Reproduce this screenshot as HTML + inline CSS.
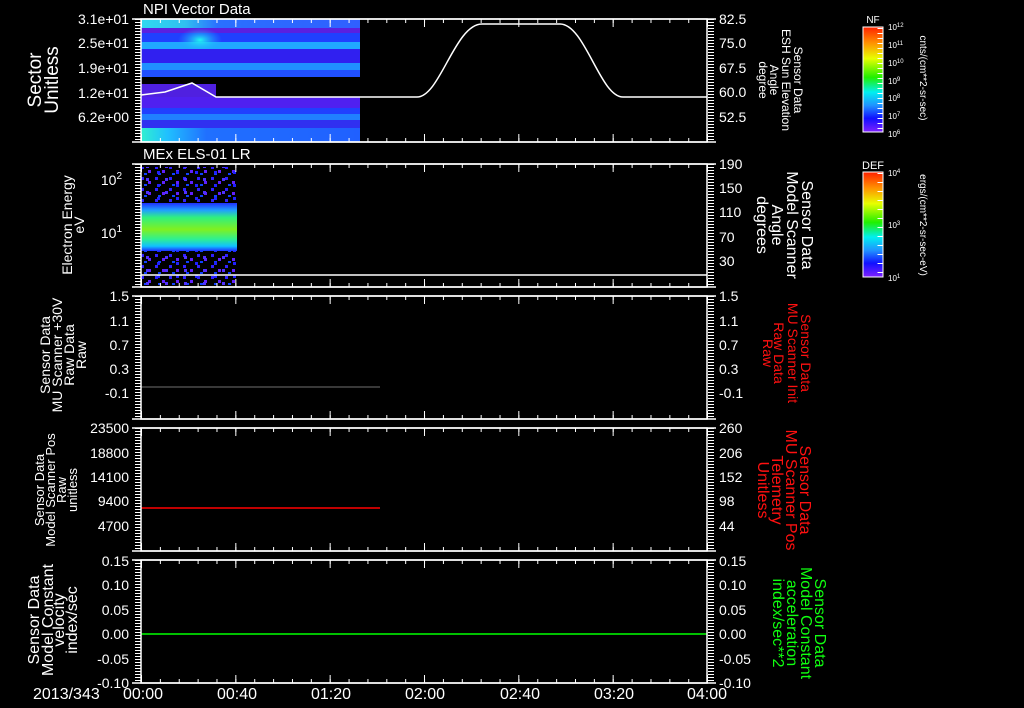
<!DOCTYPE html>
<html><head><meta charset="utf-8"><style>
html,body{margin:0;padding:0;background:#000;}
svg{display:block;}
text{font-family:"Liberation Sans",sans-serif;fill:#fff;}
</style></head><body>
<svg width="1024" height="708" viewBox="0 0 1024 708" xmlns="http://www.w3.org/2000/svg">
<defs>
<linearGradient id="cb" x1="0" y1="0" x2="0" y2="1">
<stop offset="0" stop-color="#ff2000"/><stop offset="0.15" stop-color="#ff9000"/><stop offset="0.3" stop-color="#e8ff00"/><stop offset="0.48" stop-color="#20f000"/><stop offset="0.62" stop-color="#00f0f0"/><stop offset="0.75" stop-color="#2090ff"/><stop offset="0.87" stop-color="#1010ff"/><stop offset="1" stop-color="#8020ff"/>
</linearGradient>
<linearGradient id="els" x1="0" y1="0" x2="0" y2="1">
<stop offset="0" stop-color="#2030ff"/><stop offset="0.15" stop-color="#20a0ff"/><stop offset="0.3" stop-color="#30f080"/><stop offset="0.55" stop-color="#80f020"/><stop offset="0.75" stop-color="#30f090"/><stop offset="0.9" stop-color="#10c0ff"/><stop offset="1" stop-color="#2030ff"/>
</linearGradient>
<linearGradient id="p1l" x1="0" y1="0" x2="1" y2="0">
<stop offset="0" stop-color="#30f0d0"/><stop offset="0.12" stop-color="#20c0ff"/><stop offset="0.3" stop-color="#2070ff"/><stop offset="1" stop-color="#2060ff"/>
</linearGradient>
<linearGradient id="p1t" x1="0" y1="0" x2="1" y2="0">
<stop offset="0" stop-color="#30d8f0"/><stop offset="0.2" stop-color="#30c0f0"/><stop offset="0.35" stop-color="#2a70ff"/><stop offset="1" stop-color="#3060ff"/>
</linearGradient>
<radialGradient id="cy" cx="0.5" cy="0.5" r="0.5">
<stop offset="0" stop-color="#20f8f0"/><stop offset="1" stop-color="#20a8ff" stop-opacity="0"/>
</radialGradient>
<pattern id="dots" width="14" height="11" patternUnits="userSpaceOnUse">
<rect x="1" y="1" width="3" height="3" fill="#3020ff"/><rect x="8" y="5" width="3" height="3" fill="#6020ff"/><rect x="4" y="8" width="3" height="2" fill="#1040ff"/>
</pattern>
<pattern id="dots2" width="19" height="13" patternUnits="userSpaceOnUse">
<rect x="5" y="2" width="3" height="3" fill="#2020ff"/><rect x="13" y="9" width="3" height="3" fill="#5030ff"/>
</pattern>
</defs>

<g>
<rect x="141" y="19" width="219" height="9" fill="url(#p1t)"/>
<rect x="141" y="28" width="219" height="5" fill="#5a20e0"/>
<rect x="141" y="33" width="219" height="9" fill="#2040ff"/>
<rect x="141" y="42" width="219" height="7" fill="#20a8ff"/>
<ellipse cx="200" cy="40" rx="22" ry="12" fill="url(#cy)"/>
<rect x="141" y="49" width="219" height="14" fill="#3020f0"/>
<rect x="141" y="63" width="219" height="7" fill="#2090ff"/>
<rect x="141" y="70" width="219" height="7" fill="#2050ff"/>
<rect x="141" y="84" width="75" height="13" fill="#5020e0"/>
<rect x="141" y="97" width="219" height="11" fill="#5020f0"/>
<rect x="141" y="108" width="219" height="6" fill="#2040ff"/>
<rect x="141" y="114" width="219" height="6" fill="#2080ff"/>
<rect x="141" y="120" width="219" height="8" fill="#3030f0"/>
<rect x="141" y="128" width="219" height="14" fill="url(#p1l)"/>
</g>
<path d="M141,95 L165,92 L192,83 L216,97 L417,97 C440,97 455,24 482,24 L560,24 C585,24 600,97 623,97 L707,97" fill="none" stroke="#fff" stroke-width="1.5"/>

<rect x="141" y="167" width="96" height="118" fill="url(#dots)"/>
<rect x="141" y="167" width="96" height="118" fill="url(#dots2)"/>
<rect x="141" y="203" width="96" height="48" fill="url(#els)"/>
<line x1="141" y1="275" x2="707" y2="275" stroke="#fff" stroke-width="1.5"/>

<line x1="141" y1="387" x2="380" y2="387" stroke="#707070" stroke-width="1"/>
<line x1="141" y1="508" x2="380" y2="508" stroke="#ff0000" stroke-width="1.5"/>
<line x1="141" y1="634" x2="707" y2="634" stroke="#00ff00" stroke-width="1.5"/>

<g fill="none" stroke="#fff">
<g id="fr1" transform="translate(0,19)">
<rect x="141" y="0" width="566" height="123" stroke-width="1.5"/>
<line x1="132" y1="0" x2="716" y2="0" stroke-width="1.5"/>
<line x1="132" y1="123" x2="716" y2="123" stroke-width="1.5"/>
<line x1="138" y1="0" x2="138" y2="123" stroke-width="6" stroke-dasharray="1 2"/>
<line x1="711" y1="0" x2="711" y2="123" stroke-width="6" stroke-dasharray="1 2"/>
<line x1="141" y1="2" x2="708" y2="2" stroke-width="4" stroke-dasharray="1 17.87"/>
<line x1="141" y1="121" x2="708" y2="121" stroke-width="4" stroke-dasharray="1 17.87"/>
<line x1="141" y1="4" x2="708" y2="4" stroke-width="8" stroke-dasharray="1 93.33"/>
<line x1="141" y1="119" x2="708" y2="119" stroke-width="8" stroke-dasharray="1 93.33"/>
</g>
<use href="#fr1" transform="translate(0,145)"/>
<use href="#fr1" transform="translate(0,277)"/>
<use href="#fr1" transform="translate(0,409)"/>
<use href="#fr1" transform="translate(0,541)"/>
</g>

<text x="143" y="14" font-size="15">NPI Vector Data</text>
<text x="143" y="159" font-size="15">MEx ELS-01 LR</text>

<g font-size="14" text-anchor="end">
<text x="129" y="24">3.1e+01</text>
<text x="129" y="48">2.5e+01</text>
<text x="129" y="73">1.9e+01</text>
<text x="129" y="98">1.2e+01</text>
<text x="129" y="122">6.2e+00</text>
<text x="122" y="185">10<tspan font-size="10" dy="-6">2</tspan></text>
<text x="122" y="238">10<tspan font-size="10" dy="-6">1</tspan></text>
<text x="129" y="301">1.5</text>
<text x="129" y="326">1.1</text>
<text x="129" y="350">0.7</text>
<text x="129" y="374">0.3</text>
<text x="129" y="398">-0.1</text>
<text x="129" y="433">23500</text>
<text x="129" y="458">18800</text>
<text x="129" y="482">14100</text>
<text x="129" y="506">9400</text>
<text x="129" y="531">4700</text>
<text x="129" y="566">0.15</text>
<text x="129" y="590">0.10</text>
<text x="129" y="615">0.05</text>
<text x="129" y="639">0.00</text>
<text x="129" y="664">-0.05</text>
<text x="129" y="688">-0.10</text>
</g>
<g font-size="14">
<text x="719" y="24">82.5</text><text x="719" y="48">75.0</text><text x="719" y="73">67.5</text><text x="719" y="97">60.0</text><text x="719" y="122">52.5</text>
<text x="719" y="169">190</text><text x="719" y="193">150</text><text x="719" y="217">110</text><text x="719" y="242">70</text><text x="719" y="266">30</text>
<text x="719" y="301">1.5</text><text x="719" y="326">1.1</text><text x="719" y="350">0.7</text><text x="719" y="374">0.3</text><text x="719" y="398">-0.1</text>
<text x="719" y="433">260</text><text x="719" y="458">206</text><text x="719" y="482">152</text><text x="719" y="506">98</text><text x="719" y="531">44</text>
<text x="719" y="566">0.15</text><text x="719" y="590">0.10</text><text x="719" y="615">0.05</text><text x="719" y="639">0.00</text><text x="719" y="664">-0.05</text><text x="719" y="688">-0.10</text>
</g>

<g font-size="16">
<text x="33" y="699">2013/343</text>
<g text-anchor="middle">
<text x="143" y="699">00:00</text><text x="237" y="699">00:40</text><text x="331" y="699">01:20</text><text x="425" y="699">02:00</text><text x="520" y="699">02:40</text><text x="614" y="699">03:20</text><text x="707" y="699">04:00</text>
</g></g>

<g text-anchor="middle">
<text font-size="19" transform="translate(41,80) rotate(-90)">Sector</text>
<text font-size="19" transform="translate(58,80) rotate(-90)">Unitless</text>
<text font-size="14" transform="translate(72,225) rotate(-90)">Electron Energy</text>
<text font-size="14" transform="translate(84,225) rotate(-90)">eV</text>
<text font-size="14" transform="translate(50,355) rotate(-90)">Sensor Data</text>
<text font-size="14" transform="translate(62,355) rotate(-90)">MU Scanner +30V</text>
<text font-size="14" transform="translate(74,355) rotate(-90)">Raw Data</text>
<text font-size="14" transform="translate(86,355) rotate(-90)">Raw</text>
<text font-size="13" transform="translate(44,490) rotate(-90)">Sensor Data</text>
<text font-size="13" transform="translate(55,490) rotate(-90)">Model Scanner Pos</text>
<text font-size="13" transform="translate(66,490) rotate(-90)">Raw</text>
<text font-size="13" transform="translate(77,490) rotate(-90)">unitless</text>
<text font-size="16" transform="translate(39,620) rotate(-90)">Sensor Data</text>
<text font-size="16" transform="translate(53,620) rotate(-90)">Model Constant</text>
<text font-size="16" transform="translate(64,620) rotate(-90)">velocity</text>
<text font-size="16" transform="translate(77,620) rotate(-90)">index/sec</text>
</g>

<g text-anchor="middle">
<text font-size="12" transform="translate(794,80) rotate(90)">Sensor Data</text>
<text font-size="12" transform="translate(782,80) rotate(90)">ESH Sun Elevation</text>
<text font-size="12" transform="translate(770,80) rotate(90)">Angle</text>
<text font-size="12" transform="translate(759,80) rotate(90)">degree</text>
<text font-size="16" transform="translate(802,225) rotate(90)">Sensor Data</text>
<text font-size="16" transform="translate(787,225) rotate(90)">Model Scanner</text>
<text font-size="16" transform="translate(772,225) rotate(90)">Angle</text>
<text font-size="16" transform="translate(757,225) rotate(90)">degrees</text>
<text font-size="14" transform="translate(801,353) rotate(90)" style="fill:#ff1010">Sensor Data</text>
<text font-size="14" transform="translate(788,353) rotate(90)" style="fill:#ff1010">MU Scanner Init</text>
<text font-size="14" transform="translate(774,353) rotate(90)" style="fill:#ff1010">Raw Data</text>
<text font-size="14" transform="translate(763,353) rotate(90)" style="fill:#ff1010">Raw</text>
<text font-size="16" transform="translate(800,490) rotate(90)" style="fill:#ff1010">Sensor Data</text>
<text font-size="16" transform="translate(786,490) rotate(90)" style="fill:#ff1010">MU Scanner Pos</text>
<text font-size="16" transform="translate(772,490) rotate(90)" style="fill:#ff1010">Telemetry</text>
<text font-size="16" transform="translate(758,490) rotate(90)" style="fill:#ff1010">Unitless</text>
<text font-size="16" transform="translate(815,623) rotate(90)" style="fill:#10ff10">Sensor Data</text>
<text font-size="16" transform="translate(801,623) rotate(90)" style="fill:#10ff10">Model Constant</text>
<text font-size="16" transform="translate(787,623) rotate(90)" style="fill:#10ff10">acceleration</text>
<text font-size="16" transform="translate(773,623) rotate(90)" style="fill:#10ff10">index/sec**2</text>
</g>

<rect x="863" y="27" width="20" height="105" fill="url(#cb)" stroke="#fff" stroke-width="1"/>
<line x1="880" y1="28" x2="880" y2="131" stroke="#fff" stroke-width="5" stroke-dasharray="1 4"/>
<rect x="863" y="172" width="20" height="105" fill="url(#cb)" stroke="#fff" stroke-width="1"/>
<line x1="880" y1="173" x2="880" y2="276" stroke="#fff" stroke-width="5" stroke-dasharray="1 8"/>
<text x="873" y="23" font-size="10" text-anchor="middle">NF</text>
<text x="873" y="169" font-size="11" text-anchor="middle">DEF</text>
<g font-size="8">
<text x="888" y="30">10<tspan font-size="6" dy="-3">12</tspan></text>
<text x="888" y="48">10<tspan font-size="6" dy="-3">11</tspan></text>
<text x="888" y="66">10<tspan font-size="6" dy="-3">10</tspan></text>
<text x="888" y="84">10<tspan font-size="6" dy="-3">9</tspan></text>
<text x="888" y="101">10<tspan font-size="6" dy="-3">8</tspan></text>
<text x="888" y="119">10<tspan font-size="6" dy="-3">7</tspan></text>
<text x="888" y="137">10<tspan font-size="6" dy="-3">6</tspan></text>
<text x="888" y="176">10<tspan font-size="6" dy="-3">4</tspan></text>
<text x="888" y="228">10<tspan font-size="6" dy="-3">3</tspan></text>
<text x="888" y="281">10<tspan font-size="6" dy="-3">1</tspan></text>
</g>
<text font-size="10" text-anchor="middle" transform="translate(920,78) rotate(90)">cnts/(cm**2-sr-sec)</text>
<text font-size="10" text-anchor="middle" transform="translate(920,225) rotate(90)">ergs/(cm**2-sr-sec-eV)</text>
</svg>
</body></html>
